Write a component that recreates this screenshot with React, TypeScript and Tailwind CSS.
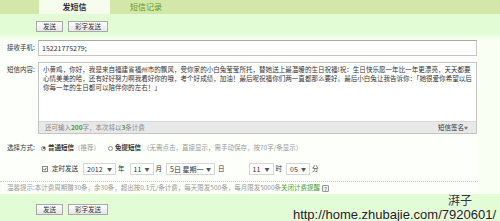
import React from "react";

function Btn({ children, w }: { children: React.ReactNode; w: string }) {
  return (
    <div
      className={`${w} h-[11px] flex items-center justify-center border border-[#a9a9a9] bg-[linear-gradient(#ffffff,#e6e6e6)] text-[6.5px] leading-none text-[#333]`}
    >
      {children}
    </div>
  );
}

function Sel({ w, children }: { w: string; children: React.ReactNode }) {
  return (
    <div
      className={`${w} h-[12px] flex items-center justify-between border border-[#d6d6d6] bg-white pl-[3px] pr-[3px] text-[7px] text-[#333]`}
    >
      <span>{children}</span>
      <span className="text-[5px] text-[#555]">▼</span>
    </div>
  );
}

export default function App() {
  return (
    <div className="relative w-[500px] h-[221px] overflow-hidden bg-[#fafff3] font-['Noto_Sans_CJK_SC',sans-serif] text-[6.5px] text-[#333]">
      {/* tabs */}
      <div className="h-[14px] bg-[#d3e7a9] flex items-stretch">
        <div className="ml-[39px] w-[71px] bg-[#f6fdee] flex items-center justify-center text-[8px] font-bold text-[#333]">
          发短信
        </div>
        <div className="ml-[20px] flex items-center text-[8px] text-[#5f9a26]">短信记录</div>
      </div>

      {/* top toolbar */}
      <div className="h-[26px] bg-[linear-gradient(#e2fcd6_0%,#e2fcd6_72%,#f7fff0_100%)] flex items-start pt-[7px] pl-[36px] gap-[5px]">
        <Btn w="w-[27px]">发送</Btn>
        <Btn w="w-[40px]">彩字发送</Btn>
      </div>

      {/* form */}
      <div className="w-[478px] bg-[#fcfffa]">
        <div className="flex items-center h-[16px]">
          <div className="w-[38px] pl-[7px]">接收手机:</div>
          <div className="w-[439px] h-[16px] border border-[#c4c4c4] border-t-[#a8a8a8] bg-white flex items-center pl-[3px] text-[7px] text-[#333]">
            15221775279;
          </div>
        </div>

        <div className="flex items-start mt-[6px]">
          <div className="w-[38px] pl-[7px] pt-[3px]">短信内容:</div>
          <div className="w-[439px] h-[72px] border border-[#c4c4c4] bg-white flex flex-col">
            <div className="flex-1 pl-[4px] pt-[2px] leading-[9px] whitespace-nowrap text-[6.55px] text-[#333]">
              <div>小黄鸡，你好，我是来自福建省福州市的飘风，受你家的小白兔莹莹所托，替她送上最温暖的生日祝福!祝：生日快乐愿一年比一年更漂亮，天天都要</div>
              <div>心情美美的哈，还有好好努力啊我看好你的哦，考个好成绩，加油！最后呢祝福你们两一直都那么要好。最后小白兔让我告诉你：「她很爱你希望以后</div>
              <div>你每一年的生日都可以陪伴你的左右！」</div>
            </div>
            <div className="h-[12px] bg-[#e8e8e8] border-t border-[#d8d8d8] flex items-center justify-between pl-[6px] pr-[8px] text-[#888]">
              <span>
                还可输入<span className="text-[#4f9a1e] font-bold">200</span>字，本次将以
                <span className="text-[#4f9a1e] font-bold">3</span>条计费
              </span>
              <span className="text-[#333]">
                短信签名<span className="text-[4px] text-[#777]">▼</span>
              </span>
            </div>
          </div>
        </div>

        {/* send mode */}
        <div className="flex items-center h-[14px] mt-[7px]">
          <div className="w-[41px] pl-[7px]">选择方式:</div>
          <span className="w-[5px] h-[5px] rounded-full border border-[#8a8a8a] bg-white flex items-center justify-center">
            <span className="w-[2px] h-[2px] rounded-full bg-[#333]" />
          </span>
          <span className="ml-[2px] font-bold">普通短信</span>
          <span className="text-[#9a9a9a]">（推荐）</span>
          <span className="ml-[8px] w-[5px] h-[5px] rounded-full border border-[#9a9a9a] bg-white" />
          <span className="ml-[2px] font-bold">免提短信</span>
          <span className="ml-[2px] text-[#9a9a9a]">（无需点击，直接显示，需手动保存，按70字/条显示）</span>
        </div>

        {/* timed send */}
        <div className="flex items-center h-[14px] mt-[7px]">
          <span className="ml-[42px] w-[6px] h-[6px] border border-[#8a8a8a] bg-white flex items-center justify-center">
            <svg width="4" height="4" viewBox="0 0 8 8">
              <path d="M1 4.2 L3.2 6.4 L7 1.5" fill="none" stroke="#333" strokeWidth="1.6" />
            </svg>
          </span>
          <span className="ml-[4px]">定时发送</span>
          <div className="ml-[5px]">
            <Sel w="w-[33px]">2012</Sel>
          </div>
          <span className="ml-[2px]">年</span>
          <div className="ml-[5px]">
            <Sel w="w-[24px]">11</Sel>
          </div>
          <span className="ml-[2px]">月</span>
          <div className="ml-[4px]">
            <Sel w="w-[49px]">5日 星期一</Sel>
          </div>
          <span className="ml-[3px]">日</span>
          <div className="ml-[24px]">
            <Sel w="w-[25px]">11</Sel>
          </div>
          <span className="ml-[2px]">时</span>
          <div className="ml-[4px]">
            <Sel w="w-[24px]">05</Sel>
          </div>
          <span className="ml-[2px]">分</span>
        </div>

        <div className="mt-[5px] border-t border-dotted border-[#c9c9c9]" />

        <div className="flex items-center h-[12px] pl-[7px] text-[#999]">
          温馨提示:本计费周期赠30条，余30条，超出按0.1元/条计费，每天限发500条，每月限发5000条
          <span className="text-[#4f9a1e]">关闭计费提醒</span>
          <span className="ml-[2px] w-[7px] h-[7px] border border-[#999] rounded-[1px] bg-[#eee] flex items-center justify-center text-[5px] leading-none text-[#555]">
            ?
          </span>
        </div>
      </div>

      {/* bottom toolbar */}
      <div className="h-[30px] bg-[#e2fcd6] flex items-start pt-[10px] pl-[36px] gap-[5px]">
        <Btn w="w-[27px]">发送</Btn>
        <Btn w="w-[40px]">彩字发送</Btn>
      </div>

      {/* watermark */}
      <div className="absolute right-[28px] top-[194px] text-[12px] leading-[12px] text-[#333] [text-shadow:0_0_2px_#fff]">
        湃子
      </div>
      <div className="absolute right-[4px] top-[209px] text-[13px] leading-[12px] text-[#222] font-['Liberation_Sans',sans-serif] [text-shadow:0_0_2px_#fff]">
        http://home.zhubajie.com/7920601/
      </div>
    </div>
  );
}
